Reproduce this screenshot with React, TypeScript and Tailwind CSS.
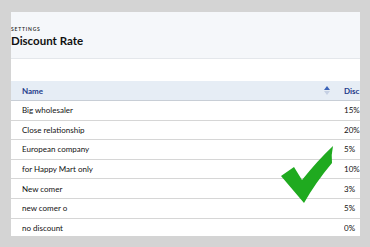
const rows = [
  { name: "Big wholesaler", rate: "15%" },
  { name: "Close relationship", rate: "20%" },
  { name: "European company", rate: "5%" },
  { name: "for Happy Mart only", rate: "10%" },
  { name: "New comer", rate: "3%" },
  { name: "new comer o", rate: "5%" },
  { name: "no discount", rate: "0%" },
];

const App = () => {
  return (
    <div
      className="relative w-[370px] h-[247px] bg-[#d4d4d4] pt-[12px] pl-[11px] overflow-hidden"
      style={{ fontFamily: "Lato, 'Liberation Sans', sans-serif" }}
    >
      <div className="w-[349px] h-[224px] bg-white overflow-hidden flex flex-col">
        <div className="h-[47px] shrink-0 bg-[#f5f7fa] border-b border-[#e4e7eb] pt-[14px]">
          <div className="text-[5px] leading-[6px] tracking-[0.16em] text-[#222] font-semibold">
            SETTINGS
          </div>
          <h1 className="text-[11.5px] leading-[15px] font-bold text-[#111] mt-[1px]">
            Discount Rate
          </h1>
        </div>
        <div className="h-[22px] shrink-0 bg-white" />
        <div className="h-[20px] shrink-0 bg-[#e6edf5] border-b border-[#c8ced6] flex items-center text-[8px] font-bold text-[#1e3a8a]">
          <span className="pl-[11px] flex-1">Name</span>
          <span className="w-[10px] flex flex-col items-center mr-[12px] leading-none">
            <svg width="6" height="9" viewBox="0 0 6 9">
              <path d="M3 0 L6 4 L0 4 Z" fill="#3b63b8" />
              <path d="M3 9 L6 5 L0 5 Z" fill="#c5d0e3" />
            </svg>
          </span>
          <span className="w-[16px] overflow-hidden whitespace-nowrap">Disc</span>
        </div>
        {rows.map((r) => (
          <div
            key={r.name}
            className="h-[19.6px] shrink-0 border-b border-[#d6d6d6] flex items-center text-[8px] text-[#111]"
          >
            <span className="pl-[11px] flex-1">{r.name}</span>
            <span className="w-[16px] overflow-hidden whitespace-nowrap">{r.rate}</span>
          </div>
        ))}
      </div>
      <svg
        className="absolute left-0 top-0"
        width="370"
        height="247"
        viewBox="0 0 370 247"
      >
        <path
          d="M281 176 L294 167 L302 180 Q318 160 333 146 Q331 155 332 163 Q316 182 304 203 Z"
          fill="#1faa1f"
        />
      </svg>
    </div>
  );
};

export default App;
